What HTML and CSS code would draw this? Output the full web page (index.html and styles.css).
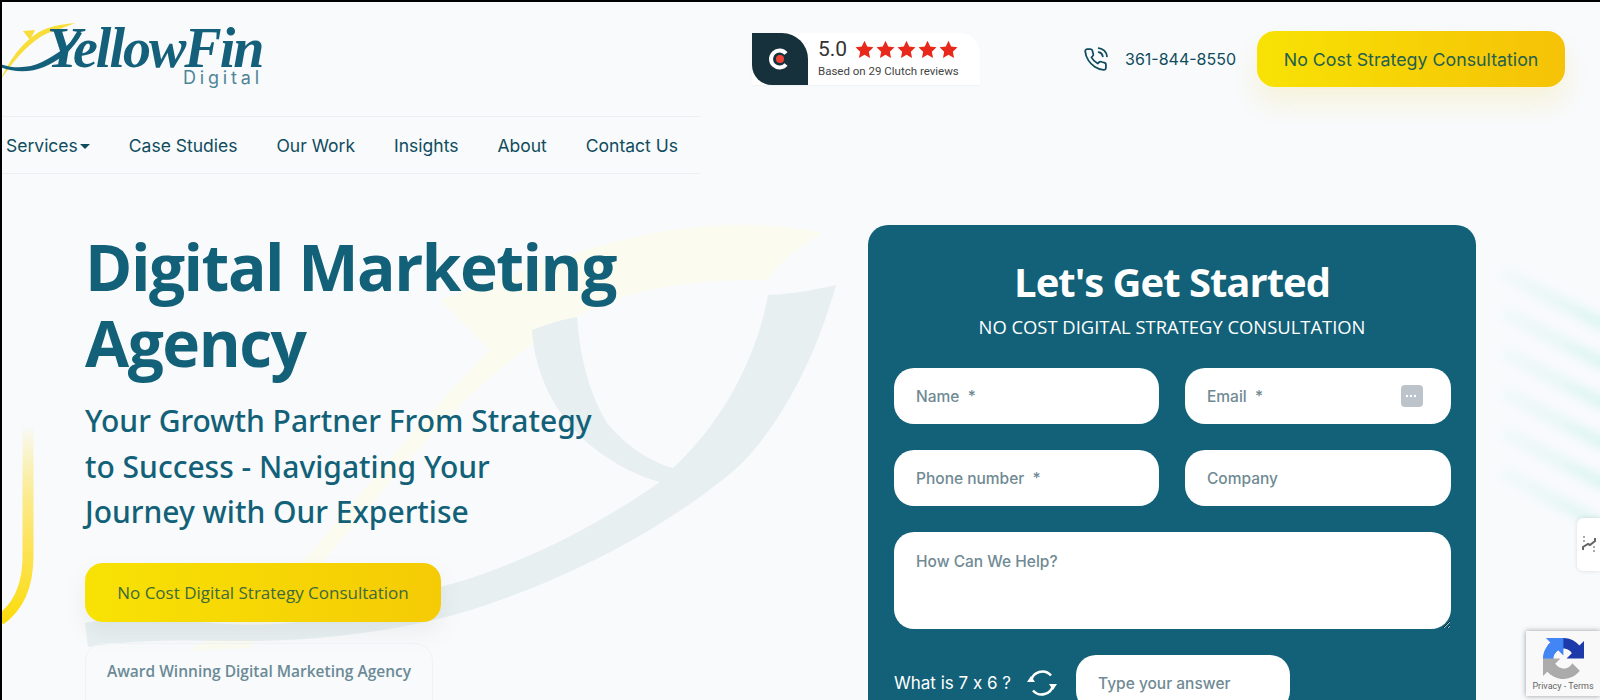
FILE: index.html
```html
<!DOCTYPE html>
<html lang="en">
  <head>
    <meta charset="UTF-8" />
    <meta name="viewport" content="width=device-width, initial-scale=1.0" />
    <title>YellowFin Digital</title>
    <link rel="stylesheet" href="styles.css">
  </head>
  <body>
    <div class="page">
      <svg class="backdrop" viewBox="2 2 1598 698" width="1598" height="698" aria-hidden="true">
        <defs>
          <linearGradient id="side-fade" x1="0" y1="0" x2="0" y2="1">
            <stop offset="0" stop-color="#fde23a" stop-opacity="0" />
            <stop offset="0.55" stop-color="#fde568" />
            <stop offset="1" stop-color="#fbdc0f" />
          </linearGradient>
          <linearGradient id="stripe-fade" gradientUnits="userSpaceOnUse" x1="1500" y1="0" x2="1600" y2="0">
            <stop offset="0" stop-color="#e4f6f4" stop-opacity="0.25" />
            <stop offset="1" stop-color="#def6f2" />
          </linearGradient>
          <filter id="soft" x="-20%" y="-50%" width="140%" height="200%"><feGaussianBlur stdDeviation="4" /></filter>
        </defs>
        <path class="mark-yellow" d="M823 233C770 222 700 222 640 236C560 254 500 280 440 300C470 330 490 350 490 350C440 400 380 470 330 530C290 580 240 620 190 650L250 648C300 590 350 530 400 470C460 400 530 335 600 305C650 285 710 279 767 280C780 262 800 245 823 233Z" />
        <path class="mark-grey" d="M836 285C800 293 785 294 768 295C760 340 735 410 673 468C650 462 625 445 607 423C590 395 580 360 577 317C560 320 545 325 532 330C535 375 555 415 590 445C615 465 640 477 660 482C600 525 510 570 440 587C350 620 280 630 200 622C160 618 120 615 85 623L88 647C130 640 180 640 233 641C320 642 420 630 500 600C600 565 690 510 740 465C780 425 815 360 836 285Z" />
        <path class="side-curve" d="M28 425V556Q28 600 0 620" />
        <g class="stripes" filter="url(#soft)">
          <path d="M1503 273L1610 328" />
          <path d="M1503 312L1610 367" />
          <path d="M1503 352L1610 407" />
          <path d="M1503 392L1610 447" />
          <path d="M1503 432L1610 487" />
          <path d="M1503 472L1610 530" />
        </g>
      </svg>

      <header class="top">
        <a class="logo" href="#">
          <svg class="logo-swoosh" viewBox="0 0 90 80" width="90" height="80" aria-hidden="true">
            <path class="swoosh-yellow" d="M1 77C12 52 30 32 48 26C57 23 66 22 75 21C66 25 56 28 48 31C30 39 15 57 1 77Z" />
            <path class="swoosh-yellow" d="M23 29L35 28L30 38Z" />
            <path class="swoosh-teal" d="M0 62C14 67 30 66 42 60C56 53 70 44 78 30L82 31C74 47 60 58 44 65C30 71 12 70 0 65Z" />
          </svg>
          <span class="logo-name">YellowFin</span>
          <span class="logo-sub">Digital</span>
        </a>

        <div class="clutch">
          <div class="clutch-icon">
            <svg viewBox="0 0 24 24" width="24" height="24" aria-hidden="true">
              <path class="clutch-c" d="M18 6.5A8.5 8.5 0 1 0 18 17.5" />
              <circle class="clutch-dot" cx="12" cy="12" r="4" />
            </svg>
          </div>
          <div class="clutch-info">
            <div class="clutch-score">
              <span class="score">5.0</span>
              <span class="stars">
                <svg viewBox="0 0 24 24"><path d="M12 1l3.4 7.3 7.9 1-5.8 5.4 1.5 7.9-7-3.9-7 3.9 1.5-7.9L.7 9.3l7.9-1z" /></svg>
                <svg viewBox="0 0 24 24"><path d="M12 1l3.4 7.3 7.9 1-5.8 5.4 1.5 7.9-7-3.9-7 3.9 1.5-7.9L.7 9.3l7.9-1z" /></svg>
                <svg viewBox="0 0 24 24"><path d="M12 1l3.4 7.3 7.9 1-5.8 5.4 1.5 7.9-7-3.9-7 3.9 1.5-7.9L.7 9.3l7.9-1z" /></svg>
                <svg viewBox="0 0 24 24"><path d="M12 1l3.4 7.3 7.9 1-5.8 5.4 1.5 7.9-7-3.9-7 3.9 1.5-7.9L.7 9.3l7.9-1z" /></svg>
                <svg viewBox="0 0 24 24"><path d="M12 1l3.4 7.3 7.9 1-5.8 5.4 1.5 7.9-7-3.9-7 3.9 1.5-7.9L.7 9.3l7.9-1z" /></svg>
              </span>
            </div>
            <div class="clutch-text">Based on 29 Clutch reviews</div>
          </div>
        </div>

        <a class="phone" href="#">
          <svg viewBox="0 0 24 24" width="25" height="25" aria-hidden="true">
            <path d="M15.05 5A5 5 0 0 1 19 8.95M15.05 1A9 9 0 0 1 23 8.94m-1 7.98v3a2 2 0 0 1-2.18 2 19.79 19.79 0 0 1-8.63-3.07 19.5 19.5 0 0 1-6-6 19.79 19.79 0 0 1-3.07-8.67A2 2 0 0 1 4.11 2h3a2 2 0 0 1 2 1.72 12.84 12.84 0 0 0 .7 2.81 2 2 0 0 1-.45 2.11L8.09 9.91a16 16 0 0 0 6 6l1.27-1.27a2 2 0 0 1 2.11-.45 12.84 12.84 0 0 0 2.81.7A2 2 0 0 1 22 16.92z" />
          </svg>
          <span>361-844-8550</span>
        </a>

        <a class="btn btn-top" href="#">No Cost Strategy Consultation</a>
      </header>

      <nav class="nav">
        <a class="has-caret" href="#">Services</a>
        <a href="#">Case Studies</a>
        <a href="#">Our Work</a>
        <a href="#">Insights</a>
        <a href="#">About</a>
        <a href="#">Contact Us</a>
      </nav>

      <main class="hero">
        <div class="hero-left">
          <h1>Digital Marketing Agency</h1>
          <p class="tagline">Your Growth Partner From Strategy to Success - Navigating Your Journey with Our Expertise</p>
          <a class="btn btn-hero" href="#">No Cost Digital Strategy Consultation</a>
          <div class="award">Award Winning Digital Marketing Agency</div>
        </div>

        <form class="lead-form">
          <h2>Let's Get Started</h2>
          <p class="form-sub">NO COST DIGITAL STRATEGY CONSULTATION</p>
          <div class="form-grid">
            <input type="text" placeholder="Name&nbsp; *">
            <div class="field-email">
              <input type="text" placeholder="Email&nbsp; *">
              <svg class="autofill" viewBox="0 0 22 22" width="22" height="22" aria-hidden="true">
                <rect width="22" height="22" rx="4" />
                <circle cx="6" cy="11" r="1.2" />
                <circle cx="10" cy="11" r="1.2" />
                <circle cx="14" cy="11" r="1.2" />
                <rect x="17" y="7" width="1.4" height="8" />
              </svg>
            </div>
            <input type="text" placeholder="Phone number&nbsp; *">
            <input type="text" placeholder="Company">
            <textarea class="full" placeholder="How Can We Help?"></textarea>
          </div>
          <div class="captcha-row">
            <label>What is 7 x 6 ?</label>
            <svg class="refresh" viewBox="0 0 32 32" width="32" height="32" aria-hidden="true">
              <path class="refresh-line" d="M5 14A11.5 11.5 0 0 1 25 8.500" />
              <path class="refresh-line" d="M27 18A11.500 11.500 0 0 1 7 23.500" />
              <path class="refresh-tip" d="M1 15H9L5 9Z" />
              <path class="refresh-tip" d="M23 17H31L27 23Z" />
            </svg>
            <input type="text" placeholder="Type your answer">
          </div>
        </form>
      </main>

      <div class="side-tab">
        <svg viewBox="0 0 14 19" width="14" height="19" aria-hidden="true">
          <path d="M1 15V12L6 9L8 10L13 6V3" />
          <path class="side-dash" d="M2 1V8M12 11V18" />
        </svg>
      </div>

      <div class="recaptcha">
        <svg viewBox="0 0 64 64" width="41" height="41" aria-hidden="true">
          <path fill="#1c3aa9" d="M64 31.955l-.033-1.37V4.687l-7.16 7.16C50.948 4.674 42.033.093 32.05.093c-10.4 0-19.622 4.96-25.458 12.64l11.736 11.86a15.55 15.55 0 0 1 4.754-5.334c2.05-1.6 4.952-2.906 8.968-2.906.485 0 .86.057 1.135.163 4.976.393 9.288 3.14 11.828 7.124l-8.307 8.307 32.274.008" />
          <path fill="#4285f4" d="M31.862.094l-1.37.033H4.594l7.16 7.16C4.58 13.147 0 22.06 0 32.046c0 10.4 4.96 19.622 12.64 25.458l11.86-11.736a15.55 15.55 0 0 1-5.334-4.754c-1.6-2.05-2.906-4.952-2.906-8.968 0-.485.057-.86.163-1.135.393-4.976 3.14-9.288 7.124-11.828l8.307 8.307.008-32.274" />
          <path fill="#ababab" d="M.001 32.045l.033 1.37v25.898l7.16-7.160c5.860 7.173 14.774 11.754 24.760 11.754 10.400 0 19.622-4.960 25.458-12.640l-11.736-11.860a15.550 15.550 0 0 1-4.754 5.334c-2.050 1.600-4.952 2.906-8.968 2.906-.485 0-.860-.057-1.135-.163-4.976-.393-9.288-3.140-11.828-7.124l8.307-8.307-32.274-.008" />
        </svg>
        <div class="recaptcha-text">Privacy - Terms</div>
      </div>
    </div>
  </body>
</html>
```

FILE: styles.css
```css
html,
body {
  margin: 0;
  height: 700px;
  overflow: hidden;
  background: #000;
}
body {
  padding: 2px 0 0 2px;
  box-sizing: border-box;
  font-family: "Inter", "Open Sans", sans-serif;
}
a {
  text-decoration: none;
}
.page {
  position: relative;
  width: 1598px;
  height: 698px;
  overflow: hidden;
  background: #f8fafc;
}
.backdrop {
  position: absolute;
  top: 0;
  left: 0;
}
.mark-yellow {
  fill: #fbfbef;
}
.mark-grey {
  fill: #e7eff1;
}
.side-curve {
  fill: none;
  stroke: url(#side-fade);
  stroke-width: 11;
}
.stripes path {
  fill: none;
  stroke: url(#stripe-fade);
  stroke-width: 13;
}

/* top bar */
.top {
  position: relative;
  display: flex;
  align-items: center;
  height: 114px;
}
.logo {
  position: relative;
  display: block;
  width: 265px;
  height: 114px;
  flex: none;
}
.logo-swoosh {
  position: absolute;
  top: 0;
  left: -2px;
}
.swoosh-yellow {
  fill: #f9dd3a;
}
.swoosh-teal {
  fill: #14607a;
}
.logo-name {
  position: absolute;
  top: 24px;
  left: 45px;
  color: #14607a;
  font-family: "Liberation Serif", serif;
  font-size: 56px;
  font-style: italic;
  font-weight: 700;
  line-height: 44px;
  letter-spacing: -2px;
  white-space: nowrap;
}
.logo-sub {
  position: absolute;
  top: 65px;
  left: 181px;
  color: #4f8496;
  font-size: 18px;
  line-height: 22px;
  letter-spacing: 3.8px;
}
.clutch {
  display: flex;
  width: 228px;
  height: 52px;
  margin-left: 485px;
  background: #fff;
  border-radius: 0 20px 0 0;
  box-shadow: 0 1px 2px rgba(0, 0, 0, 0.04);
}
.clutch-icon {
  display: flex;
  align-items: center;
  justify-content: center;
  width: 56px;
  background: #17313c;
  border-radius: 0 26px 0 20px;
}
.clutch-c {
  fill: none;
  stroke: #fff;
  stroke-width: 4;
}
.clutch-dot {
  fill: #ef4335;
}
.clutch-info {
  padding: 3px 0 0 10px;
}
.clutch-score {
  display: flex;
  align-items: center;
  gap: 8px;
  height: 26px;
}
.score {
  color: #333;
  font-family: "Roboto", sans-serif;
  font-size: 21px;
}
.stars {
  display: flex;
  gap: 2px;
}
.stars svg {
  width: 19px;
  height: 19px;
  fill: #e8281a;
}
.clutch-text {
  margin-top: 2px;
  color: #444;
  font-family: "Roboto", sans-serif;
  font-size: 11.5px;
}
.phone {
  display: flex;
  align-items: center;
  gap: 17px;
  margin-left: 103px;
  color: #0f4c5c;
  font-size: 16px;
}
.phone svg {
  fill: none;
  stroke: #0f4c5c;
  stroke-width: 1.7;
  stroke-linecap: round;
  stroke-linejoin: round;
}
.btn {
  display: flex;
  align-items: center;
  justify-content: center;
  box-sizing: border-box;
  background: linear-gradient(90deg, #f8e204, #f5c207);
}
.btn-top {
  width: 308px;
  height: 56px;
  margin-left: 21px;
  color: #245f4e;
  font-size: 17.8px;
  border-radius: 18px;
  box-shadow: 0 16px 28px rgba(245, 205, 40, 0.16);
}

/* menu */
.nav {
  position: relative;
  display: flex;
  gap: 39px;
  align-items: center;
  box-sizing: border-box;
  width: 698px;
  height: 58px;
  padding-left: 4px;
  border-top: 1px solid #eceff2;
  border-bottom: 1px solid #eceff2;
}
.nav a {
  color: #0f4c5c;
  font-size: 17.5px;
}
.has-caret::after {
  content: "";
  display: inline-block;
  margin-left: 2px;
  vertical-align: 3px;
  border-top: 5px solid #0f4c5c;
  border-left: 5px solid transparent;
  border-right: 5px solid transparent;
}

/* hero */
.hero {
  position: relative;
  display: flex;
  align-items: flex-start;
  padding: 51px 0 0 83px;
}
.hero-left {
  flex: none;
  width: 560px;
  font-family: "Open Sans", sans-serif;
}
h1 {
  margin: 4px 0 0;
  color: #126178;
  font-size: 64px;
  font-weight: 700;
  line-height: 76px;
  letter-spacing: -1.5px;
}
.tagline {
  width: 518px;
  margin: 17px 0 0;
  color: #126178;
  font-family: "Noto Sans", sans-serif;
  font-size: 30px;
  font-weight: 500;
  line-height: 45.500px;
}
.btn-hero {
  width: 356px;
  height: 59px;
  margin-top: 28px;
  color: #3d6a3a;
  font-size: 17px;
  font-weight: 500;
  border-radius: 18px;
  background: linear-gradient(90deg, #f8e204, #f5cb05);
  box-shadow: 0 10px 22px rgba(120, 130, 120, 0.1);
}
.award {
  box-sizing: border-box;
  width: 348px;
  height: 80px;
  margin-top: 21px;
  padding-top: 16px;
  color: #6b8a96;
  font-size: 15.5px;
  font-weight: 600;
  text-align: center;
  border: 1px solid #f0f3f5;
  border-radius: 18px;
}

/* form */
.lead-form {
  box-sizing: border-box;
  flex: none;
  width: 608px;
  height: 560px;
  margin-left: 223px;
  padding: 27px 26px 0;
  color: #fff;
  background: #126178;
  border-radius: 20px;
}
h2 {
  margin: 0;
  font-family: "Open Sans", sans-serif;
  font-size: 40px;
  font-weight: 700;
  line-height: 60px;
  letter-spacing: -1px;
  text-align: center;
}
.form-sub {
  margin: 2px 0 0;
  font-family: "Open Sans", sans-serif;
  font-size: 18.4px;
  line-height: 26px;
  text-align: center;
}
.form-grid {
  display: grid;
  grid-template-columns: 265px 266px;
  gap: 26px;
  margin-top: 28px;
}
input,
textarea {
  box-sizing: border-box;
  width: 100%;
  height: 56px;
  padding: 0 22px;
  font-family: inherit;
  font-size: 15.500px;
  background: #fff;
  border: 0;
  border-radius: 20px;
}
input::placeholder,
textarea::placeholder {
  color: #6f8a93;
  opacity: 1;
  font-weight: 500;
}
.field-email {
  position: relative;
}
.autofill {
  position: absolute;
  top: 17px;
  right: 28px;
  fill: #bcc3cb;
}
.autofill circle,
.autofill rect + rect {
  fill: #fff;
}
.full {
  grid-column: 1 / 3;
  width: 557px;
  height: 97px;
  padding-top: 20px;
}
.captcha-row {
  display: flex;
  align-items: center;
  margin-top: 26px;
}
.captcha-row label {
  width: 122px;
  font-size: 17px;
  font-feature-settings: "calt" 0;
}
.refresh {
  flex: none;
  margin: 0 18px 0 10px;
}
.refresh-line {
  fill: none;
  stroke: #fff;
  stroke-width: 2.500;
}
.refresh-tip {
  fill: #fff;
}
.captcha-row input {
  width: 214px;
}

/* floating bits */
.side-tab {
  position: absolute;
  top: 516px;
  right: 0;
  display: flex;
  align-items: center;
  width: 23px;
  height: 53px;
  padding-left: 5px;
  box-sizing: border-box;
  background: #fff;
  border-radius: 6px 0 0 6px;
  box-shadow: 0 0 4px rgba(0, 0, 0, 0.12);
}
.side-tab path {
  fill: none;
  stroke: #666;
  stroke-width: 2;
}
.side-tab .side-dash {
  stroke: #aaa;
  stroke-dasharray: 2 2;
}
.recaptcha {
  position: absolute;
  top: 629px;
  right: 0;
  width: 74px;
  height: 65px;
  padding-top: 7px;
  box-sizing: border-box;
  text-align: center;
  background: #f9f9f9;
  box-shadow: 0 0 5px rgba(128, 128, 128, 0.8);
}
.recaptcha svg {
  display: block;
  margin: 0 auto 0 17px;
}
.recaptcha-text {
  margin-top: 2px;
  color: #666;
  font-family: "Roboto", sans-serif;
  font-size: 9px;
  white-space: nowrap;
}
```
